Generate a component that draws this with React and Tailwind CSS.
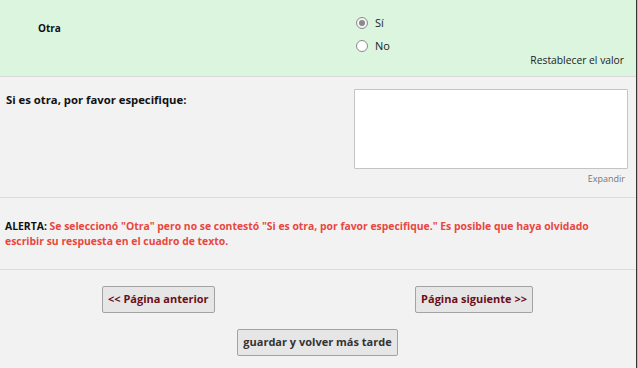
export default function App() {
  const font = { fontFamily: '"Open Sans", "Noto Sans", sans-serif' };
  return (
    <div className="w-[638px] h-[368px] overflow-hidden flex bg-[#f2f2f2]" style={font}>
      <div className="w-[636px] flex flex-col">
        {/* Question row */}
        <div className="h-[77px] bg-[#dbf5df] border-b border-[#d9d9d9] flex relative">
          <div className="w-[356px] pl-[38px] pt-[14px]">
            <span className="text-[10px] font-bold text-[#111]">Otra</span>
          </div>
          <div className="flex flex-col pt-[15px] gap-[7px]">
            <div className="flex items-center gap-[7px] h-[16px]">
              <span className="w-[12px] h-[12px] rounded-full border border-[#8a8a8a] bg-[#f4f4f4] flex items-center justify-center">
                <span className="w-[6px] h-[6px] rounded-full bg-[#8a8a8a]" />
              </span>
              <span className="text-[11px] text-[#222]">Sí</span>
            </div>
            <div className="flex items-center gap-[7px] h-[16px]">
              <span className="w-[12px] h-[12px] rounded-full border border-[#8a8a8a] bg-white" />
              <span className="text-[11px] text-[#222]">No</span>
            </div>
          </div>
          <div className="absolute right-[12px] top-[53px] text-[10.3px] text-[#222]">Restablecer el valor</div>
        </div>

        {/* Specify row */}
        <div className="h-[121px] border-b border-[#dcdcdc] flex">
          <div className="w-[354px] pl-[6px] pt-[9px]">
            <span className="text-[11.3px] font-bold text-[#111]">Si es otra, por favor especifique:</span>
          </div>
          <div className="flex flex-col pt-[12px] w-[274px]">
            <div className="h-[80px] bg-white border border-[#c4c4c4] rounded-[1px]" />
            <div className="text-right text-[9px] text-[#777] mt-[3px] pr-[3px]">Expandir</div>
          </div>
        </div>

        {/* Alert */}
        <div className="h-[72px] border-b border-[#dcdcdc] pl-[5px] pt-[21px] pr-[30px]">
          <p className="text-[10.4px] font-bold leading-[15px] text-[#e8473f]">
            <span className="text-[#111]">ALERTA:</span> Se seleccionó "Otra" pero no se contestó "Si es otra, por favor especifique." Es posible que haya olvidado escribir su respuesta en el cuadro de texto.
          </p>
        </div>

        {/* Buttons */}
        <div className="flex flex-col pt-[16px]">
          <div className="flex justify-between pl-[102px] pr-[103px]">
            <button className="h-[27px] px-[5px] bg-[#e6e6e6] border border-[#a3a3a3] rounded-[2px] text-[11px] font-bold text-[#6b0f1a]">
              &lt;&lt; Página anterior
            </button>
            <button className="h-[27px] px-[5px] bg-[#e6e6e6] border border-[#a3a3a3] rounded-[2px] text-[11px] font-bold text-[#6b0f1a]">
              Página siguiente &gt;&gt;
            </button>
          </div>
          <div className="flex justify-center mt-[16px]">
            <button className="ml-[-1px] h-[27px] px-[5px] bg-[#e6e6e6] border border-[#a3a3a3] rounded-[2px] text-[11px] font-bold text-[#333]">
              guardar y volver más tarde
            </button>
          </div>
        </div>
      </div>
      <div className="w-[1px] bg-[#333]" />
      <div className="w-[1px] bg-[#bdbdbd]" />
    </div>
  );
}
